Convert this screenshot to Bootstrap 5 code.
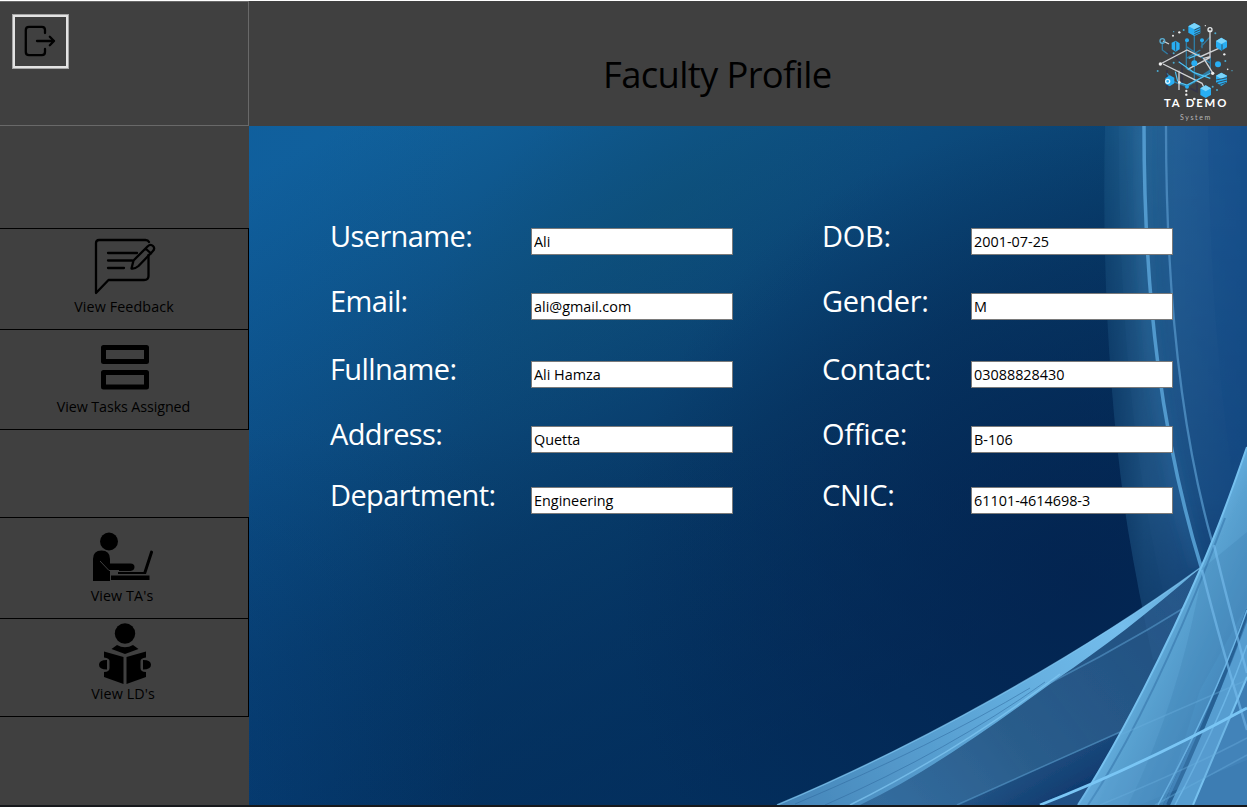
<!DOCTYPE html>
<html lang="en">
<head>
<meta charset="utf-8">
<meta name="viewport" content="width=device-width, initial-scale=1">
<title>Faculty Profile</title>
<link href="https://cdn.jsdelivr.net/npm/bootstrap@5.3.0/dist/css/bootstrap.min.css" rel="stylesheet">
<style>
  html, body { height: 100%; }
  body { font-family: "Open Sans", "Noto Sans", sans-serif; color: #000; background: #404040; overflow: hidden; }
  .app { height: 807px; border-top: 1px solid #fff; border-bottom: 2px solid #17191c; }
  .side { width: 249px; background: #404040; }
  .side-top { height: 125px; border: 1px solid #696969; border-left: 0; padding: 12px 0 0 12px; }
  .logout { width: 57px; height: 55px; border: 3px solid #e3e3e3; outline: 1px solid #a5a5a5; outline-offset: -1px; border-radius: 0; }
  .logout svg { margin: -2px 2px 0 0; }
  .menu-group { border-top: 1px solid #000; }
  .menu-btn { border: 0; border-bottom: 1px solid #000; border-right: 1px solid #000; border-radius: 0; font-size: 14.3px; line-height: 20px; color: #000; letter-spacing: 0; padding: 0; }
  .menu-btn:hover { color: #000; background: #4a4a4a; }
  .menu-btn svg { transform: translateX(1px); }
  .item-feedback { height: 101px; padding-bottom: 2px; letter-spacing: .12px; }
  .item-feedback svg { transform: translate(1px, -2px); }
  .item-tasks { height: 100px; padding-bottom: 1px; letter-spacing: -.1px; padding-right: 1px; }
  .item-tas { height: 101px; padding: 0 4px 2px 0; letter-spacing: .1px; }
  .item-lds { height: 98px; padding: 0 2px 8px 0; letter-spacing: .1px; }
  .item-lds svg { transform: translateX(2px); }
  .g1 { margin-top: 102px; }
  .g2 { margin-top: 87px; }
  .topbar { height: 125px; background: #404040; }
  .page-title { font-size: 36.4px; font-weight: 400; line-height: 50px; letter-spacing: -.65px; margin: 48px 0 0 354px; }
  .brand-logo { margin: 9px 0 0; }
  .stage { background: #06305d; }
  .backdrop { z-index: 0; }
  .profile { position: relative; z-index: 1; padding: 102px 0 0 82px; display: grid; grid-template-columns: 200px 291px 149px 202px; grid-template-rows: 65px 68px 65px 61px 27px; }
  .profile label { color: #fff; font-size: 29px; line-height: 40px; height: 27px; margin: -12px 0 0 0; letter-spacing: -.3px; white-space: nowrap; }
  .profile .lead-col { letter-spacing: -.62px; margin-left: -1px; }
  .profile .form-control { width: 202px; height: 27px; padding: 0 2px; border: 1px solid #7a7a7a; border-radius: 0; font-size: 14.4px; line-height: 20px; color: #000; letter-spacing: 0; background: #fff; }
</style>
</head>
<body>
<div class="app d-flex">
  <aside class="side d-flex flex-column flex-shrink-0">
    <div class="side-top">
      <button class="logout btn p-0 d-flex align-items-center justify-content-center" aria-label="Log out">
        <svg width="32" height="32" viewBox="0 0 32 32" fill="none" stroke="#000" stroke-width="2.3" stroke-linecap="round" stroke-linejoin="round"><path d="M21 8V5Q21 1.800 17.800 1.800H5Q1.800 1.800 1.800 5V27Q1.800 30.200 5 30.200H17.800Q21 30.200 21 27V24M13 16H30M25.800 11.800 30 16 25.800 20.200"/></svg>
      </button>
    </div>
    <div class="menu-group g1 d-flex flex-column">
      <button class="menu-btn item-feedback btn">
        <svg class="d-block mx-auto" width="62" height="57" viewBox="0 0 62 57" fill="none" stroke="#000" stroke-width="2.3" stroke-linecap="round" stroke-linejoin="round"><path d="M55 4Q54 2 51.500 2H5Q2 2 2 5V55L14.500 42H50Q54.500 42 54.500 38V17M14 15H43M14 22.500H38M14 30H30"/><path d="M37.500 30.500 39.500 22.500 53.500 8.500Q56.500 5.500 59 8T58.500 13.500L44.500 28Q41 31 37.500 30.500ZM51.500 10.500 57 15.500"/></svg>
        View Feedback
      </button>
      <button class="menu-btn item-tasks btn">
        <svg class="d-block mx-auto mb-1" width="48" height="52" viewBox="0 0 48 52" fill="none" stroke="#000" stroke-width="5" stroke-linejoin="round"><path d="M2.500 6.500H45.500V20.500H2.500ZM2.500 31.500H45.500V46H2.500Z"/></svg>
        View Tasks Assigned
      </button>
    </div>
    <div class="menu-group g2 d-flex flex-column">
      <button class="menu-btn item-tas btn">
        <svg class="d-block mx-auto mt-1 mb-1" width="62" height="50" viewBox="0 0 62 50"><circle cx="17" cy="9.500" r="9"/><path d="M1 49V27Q1 18.500 9.500 18.500T18 27V31.500H38.500Q42.500 31.500 42.500 35T38.500 39H26V40H51.500L58 20Q58.500 18 60 18.700T61 20.500L54 42H26V39H18V49Z"/><path d="M19 43.500H57.500V48H19Z"/><path d="M8 29 17 38.500H27" fill="none" stroke="#404040"/></svg>
        View TA's
      </button>
      <button class="menu-btn item-lds btn">
        <svg class="d-block mx-auto" width="52" height="61" viewBox="0 0 52 61"><circle cx="26" cy="10.500" r="10.200"/><path d="M12.500 26 18 22Q26 26.500 34 22L39.500 26 26 31ZM5 28.500 24.500 34V61L5 54V49Q10.500 49 10.500 45V38Q10.500 35 5 34.500ZM47 28.500 27.500 34V61L47 54V49Q41.500 49 41.500 45V38Q41.500 35 47 34.500ZM8 37V46.500Q0 46.500 0 41.700T8 37ZM44 37V46.500Q52 46.500 52 41.700T44 37Z"/></svg>
        View LD's
      </button>
    </div>
  </aside>

  <main class="flex-grow-1 d-flex flex-column">
    <header class="topbar d-flex justify-content-between flex-shrink-0">
      <h1 class="page-title text-nowrap">Faculty Profile</h1>
      <svg class="brand-logo" width="100" height="115" viewBox="0 0 300 345">
        <g fill="none" stroke="#35354a" stroke-width="5"><path d="M60 180V240M80 135 105 160V230M60 125 90 145M190 130V190M130 235 150 245V220M95 100V125"/></g>
        <g fill="none" stroke="#2f7ca3" stroke-width="4"><path d="M142 70V220M190 80 162 110M118 92V110L162 140 190 160M118 110V175L160 200 190 180V140M118 145 160 120M60 190 80 215 120 230 190 185M46 95V120L62 132M165 95V115"/></g>
        <g fill="none" stroke="#d0d2d5" stroke-width="4"><path d="M40 162 120 120 160 140 222 112M48 162 165 220 172 235M189 60V140L170 145 198 190M122 178 190 142M96 182V240M48 93 66 102"/></g>
        <g fill="none" stroke="#4ec3f5" stroke-width="3.500"><path d="M95 155 142 188 190 205M125 145 158 132M95 217 120 225 190 190M85 185 92 214"/></g>
        <g fill="#28aef3"><path d="M142 39 160 49V70L142 78 124 68V49Z"/><path d="M223 83 240 93V112L223 122 207 112V93Z"/><path d="M176 226 192 235V255L176 264 160 255V235Z"/><path d="M223 188 240 197V217L223 228 207 217V197Z"/><path d="M74 98 86 92 98 100V118L86 125 74 117Z"/><path d="M55 205 68 196 82 203V220L68 229 56 222Z"/><circle cx="142" cy="160" r="9"/><circle cx="213" cy="163" r="9"/><circle cx="120" cy="91" r="6"/><circle cx="165" cy="91" r="6"/><circle cx="120" cy="230" r="6"/></g>
        <g fill="#7ad4fa"><path d="M142 39 160 49 142 58 124 49ZM223 83 240 93 223 102 207 93ZM176 226 192 235 176 244 160 235ZM223 188 240 197 223 207 207 197Z"/></g>
        <path d="M142 60 160 52M142 67 160 59M142 74 160 66M207 210 240 203M209 218 240 210M217 224 238 217M86 95V122M225 103V120" stroke="#305064" stroke-width="3"/>
        <g fill="none" stroke="#e5e8ea" stroke-width="4"><circle cx="189" cy="59" r="6"/><circle cx="46" cy="93" r="7" stroke="#59aed3"/><circle cx="62" cy="214" r="6" stroke="#d8f3ff"/></g>
        <g fill="#eee"><circle cx="40" cy="162" r="5"/><circle cx="97" cy="67" r="3.500"/><circle cx="78" cy="77" r="3"/><circle cx="232" cy="133" r="3.500"/><circle cx="197" cy="190" r="5"/><circle cx="118" cy="243" r="3.500"/><circle cx="118" cy="254" r="3.500"/><circle cx="142" cy="267" r="4"/><circle cx="97" cy="217" r="4"/><circle cx="242" cy="178" r="2.500"/><circle cx="175" cy="47" r="2"/></g>
        <g fill="#4ba9ce"><circle cx="110" cy="60" r="3"/><circle cx="205" cy="70" r="3"/><circle cx="80" cy="130" r="3"/><circle cx="235" cy="153" r="3"/><circle cx="197" cy="230" r="3"/><circle cx="80" cy="65" r="2"/><circle cx="32" cy="183" r="3"/><circle cx="255" cy="182" r="2"/><circle cx="210" cy="240" r="3"/><circle cx="80" cy="158" r="3"/></g>
        <text x="51" y="291" textLength="187" font-family="Lato, sans-serif" font-weight="700" font-size="34" fill="#fff">TA DEMO</text>
        <text x="99" y="329" textLength="91" font-family="Lato, sans-serif" font-size="21" fill="#b8b8b8">System</text>
      </svg>
    </header>

    <section class="stage position-relative flex-grow-1 overflow-hidden">
      <svg class="backdrop position-absolute top-0 start-0 w-100 h-100" viewBox="249 126 998 679" preserveAspectRatio="none" aria-hidden="true">
        <defs>
          <linearGradient id="sky" gradientUnits="userSpaceOnUse" x1="420" y1="90" x2="760" y2="760"><stop offset="0" stop-color="#11629c"/><stop offset=".3" stop-color="#0d4e81"/><stop offset=".6" stop-color="#083b69"/><stop offset="1" stop-color="#032a57"/></linearGradient>
          <radialGradient id="teal" gradientUnits="userSpaceOnUse" cx="0" cy="0" r="1" gradientTransform="translate(670 210) rotate(-40) scale(300 150)"><stop offset="0" stop-color="#0e5070" stop-opacity=".4"/><stop offset="1" stop-color="#0e5070" stop-opacity="0"/></radialGradient>
          <radialGradient id="deep" gradientUnits="userSpaceOnUse" cx="1080" cy="580" r="460"><stop offset="0" stop-color="#03234f" stop-opacity=".85"/><stop offset="1" stop-color="#03234f" stop-opacity="0"/></radialGradient>
          <linearGradient id="left" x1="0" x2="1" y1="0" y2="0"><stop offset="0" stop-color="#0b55a0" stop-opacity=".22"/><stop offset="1" stop-color="#0b55a0" stop-opacity="0"/></linearGradient>
          <linearGradient id="low" gradientUnits="userSpaceOnUse" x1="0" x2="0" y1="430" y2="805"><stop offset="0" stop-color="#033464" stop-opacity="0"/><stop offset="1" stop-color="#033160" stop-opacity=".7"/></linearGradient>
          <linearGradient id="veil" gradientUnits="userSpaceOnUse" x1="1104" x2="1247" y1="0" y2="0"><stop offset="0" stop-color="#2b6b98" stop-opacity=".25"/><stop offset=".28" stop-color="#2f70a2" stop-opacity=".65"/><stop offset=".5" stop-color="#28649c" stop-opacity=".85"/><stop offset="1" stop-color="#1a5391" stop-opacity=".9"/></linearGradient>
          <linearGradient id="veilFade" x1="0" x2="0" y1="0" y2="1"><stop offset="0" stop-color="#fff"/><stop offset=".65" stop-color="#ccc"/><stop offset="1" stop-color="#444"/></linearGradient>
          <mask id="fade"><path fill="url(#veilFade)" d="M1090 120H1260V700H1090Z"/></mask>
          <linearGradient id="under" gradientUnits="userSpaceOnUse" x1="900" y1="820" x2="1190" y2="600"><stop offset="0" stop-color="#3973a5" stop-opacity=".9"/><stop offset=".4" stop-color="#306594" stop-opacity=".85"/><stop offset="1" stop-color="#2a5d90" stop-opacity=".75"/></linearGradient>
          <linearGradient id="dusk" gradientUnits="userSpaceOnUse" x1="1010" y1="730" x2="1050" y2="805"><stop offset="0" stop-color="#123f72" stop-opacity="0"/><stop offset="1" stop-color="#0b356b" stop-opacity=".85"/></linearGradient>
          <linearGradient id="sweep" gradientUnits="userSpaceOnUse" x1="780" y1="805" x2="1200" y2="568"><stop offset="0" stop-color="#4585b8"/><stop offset=".5" stop-color="#60aadb"/><stop offset=".8" stop-color="#74bdec"/><stop offset="1" stop-color="#62a9d8"/></linearGradient>
          <linearGradient id="beam" gradientUnits="userSpaceOnUse" x1="1117" y1="700" x2="1215" y2="745"><stop offset="0" stop-color="#69b5e6"/><stop offset=".25" stop-color="#5aa2d1"/><stop offset="1" stop-color="#3f82b7"/></linearGradient>
          <filter id="glow" filterUnits="userSpaceOnUse" x="1090" y="110" width="170" height="640"><feGaussianBlur stdDeviation="6"/></filter>
          <filter id="fine" filterUnits="userSpaceOnUse" x="740" y="110" width="530" height="710"><feGaussianBlur stdDeviation=".7"/></filter>
        </defs>
        <path fill="url(#sky)" d="M249 126H1247V805H249Z"/>
        <path fill="url(#teal)" d="M249 126H1247V805H249Z"/>
        <path fill="url(#low)" d="M249 430H1247V805H249Z"/>
        <path fill="url(#deep)" d="M249 126H1247V805H249Z"/>
        <path fill="url(#left)" d="M249 126H480V805H249Z"/>
        <g mask="url(#fade)">
          <path fill="url(#veil)" d="M1105 126C1102 260 1108 400 1128 530Q1138 590 1153 660L1247 640V126Z"/>
          <path fill="#4d8ebe" fill-opacity=".06" d="M1119 126C1118 310 1134 470 1165 600L1200 568C1160 440 1144 280 1142 126Z"/>
          <path fill="#164e8b" fill-opacity=".3" d="M1208 126Q1210 320 1232 470L1247 440V126Z"/>
        </g>
        <path fill="none" filter="url(#glow)" stroke="#3c8dc2" stroke-opacity=".15" stroke-width="12" d="M1142 126C1142 290 1155 430 1198 568"/>
        <g fill="none" filter="url(#fine)">
          <path stroke="#5199cd" stroke-width="3.500" d="M1144 126C1144 300 1162 440 1202 570"/>
          <path stroke="#4685b9" stroke-width="2.300" d="M1166 126C1166 290 1180 430 1213 545"/>
        </g>
        <g filter="url(#fine)">
          <path fill="url(#under)" d="M777 805C920 745 1080 655 1200 568L1247 532V805Z"/>
          <path fill="url(#dusk)" d="M957 805 1122 732 1080 805Z"/>
          <path fill="url(#sweep)" d="M777 805C920 745 1080 655 1200 568C1150 612 1100 650 1057 679C990 728 925 774 860 805Z"/>
          <path fill="none" stroke="#2b659b" stroke-opacity=".5" d="M825 805Q950 750 1045 682M795 804Q935 745 1030 688"/>
          <path fill="none" stroke="#82c9f4" stroke-opacity=".7" stroke-width="1.500" d="M850 805Q960 750 1060 674M777 805C920 745 1080 655 1200 568L1247 532"/>
          <path fill="none" stroke="#5b9fd0" stroke-opacity=".55" stroke-width="1.500" d="M1050 683Q1150 632 1247 568M957 805 1120 732"/>
          <path fill="url(#beam)" d="M1078 805C1120 740 1170 640 1200 570Q1220 525 1247 447V617L1163 805Z"/>
          <path fill="#3e80b4" fill-opacity=".3" d="M1203 568 1247 532V605L1200 690 1164 805H1128Q1180 700 1203 568Z"/>
          <path fill="#3c7db3" d="M1163 805 1247 617V805Z"/>
          <path fill="#64afe0" fill-opacity=".65" d="M1168 805Q1213 715 1247 622V677L1193 805Z"/>
          <path fill="none" stroke="#276194" stroke-width="4" d="M1168 805Q1215 705 1248 610"/>
          <path fill="none" stroke="#245f98" stroke-width="2" stroke-opacity=".4" d="M1088 805Q1155 705 1225 518"/>
          <path fill="none" stroke="#76c1ef" stroke-width="2" d="M1078 805C1120 740 1170 640 1200 570Q1220 525 1247 447M1193 805 1247 677"/>
          <path fill="none" stroke="#6cb5e6" stroke-width="1.500" d="M1158 805Q1215 700 1247 610M1175 805Q1220 720 1247 645"/>
          <path fill="none" stroke="#75bced" stroke-width="2.500" stroke-opacity=".65" d="M1202 570C1212 610 1227 665 1247 730M1214 545Q1227 600 1247 673"/>
          <path fill="#5799ca" fill-opacity=".25" d="M1040 805 1100 780Q1175 750 1247 708V760L1140 805Z"/>
          <path fill="none" stroke="#7ac6f5" stroke-width="2.800" d="M1040 805Q1140 766 1247 708"/>
          <path fill="none" stroke="#6ab0df" stroke-width="1.500" stroke-opacity=".4" d="M1100 805Q1190 768 1247 738M1155 805 1247 755M1120 735 1247 680"/>
        </g>
      </svg>
      <form class="profile">
        <label class="lead-col" for="f1">Username:</label><input id="f1" class="form-control" value="Ali">
        <label for="f2">DOB:</label><input id="f2" class="form-control" value="2001-07-25">
        <label class="lead-col" for="f3">Email:</label><input id="f3" class="form-control" value="ali@gmail.com">
        <label for="f4">Gender:</label><input id="f4" class="form-control" value="M">
        <label class="lead-col" for="f5">Fullname:</label><input id="f5" class="form-control" value="Ali Hamza">
        <label for="f6">Contact:</label><input id="f6" class="form-control" value="03088828430">
        <label class="lead-col" for="f7">Address:</label><input id="f7" class="form-control" value="Quetta">
        <label for="f8">Office:</label><input id="f8" class="form-control" value="B-106">
        <label class="lead-col" for="f9">Department:</label><input id="f9" class="form-control" value="Engineering">
        <label for="f10">CNIC:</label><input id="f10" class="form-control" value="61101-4614698-3">
      </form>
    </section>
  </main>
</div>
<script src="https://cdn.jsdelivr.net/npm/bootstrap@5.3.0/dist/js/bootstrap.bundle.min.js"></script>
</body>
</html>
